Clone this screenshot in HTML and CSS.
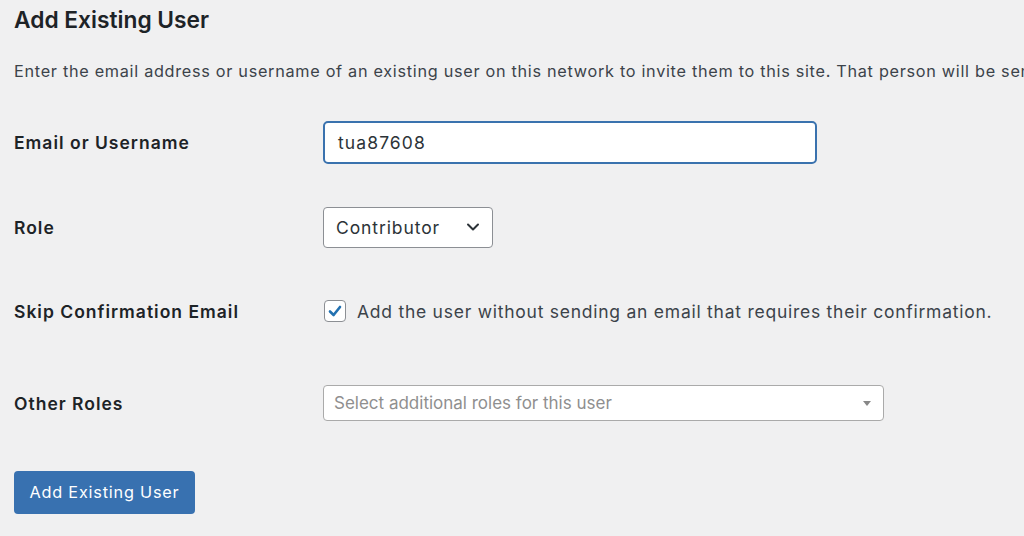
FILE: index.html
```html
<!DOCTYPE html>
<html lang="en">
<head>
<meta charset="utf-8">
<title>Add Existing User</title>
<link rel="stylesheet" href="styles.css">
</head>
<body>
<div class="wrap">
  <h2 class="title">Add Existing User</h2>
  <p class="desc">Enter the email address or username of an existing user on this network to invite them to this site. That person will be sent an email asking them to confirm the invite.</p>
  <div class="form-table">
    <div class="row row-email">
      <div class="label">Email or Username</div>
      <div class="field"><div class="input focused">tua87608</div></div>
    </div>
    <div class="row row-role">
      <div class="label">Role</div>
      <div class="field">
        <div class="select">
          <span>Contributor</span>
          <svg class="chev" width="16" height="16" viewBox="0 0 16 16"><path d="M3 5.5 L8 10.5 L13 5.5" fill="none" stroke="#2c3338" stroke-width="2" stroke-linecap="round" stroke-linejoin="round"/></svg>
        </div>
      </div>
    </div>
    <div class="row row-skip">
      <div class="label">Skip Confirmation Email</div>
      <div class="field check-field">
        <span class="checkbox"><svg width="20" height="20" viewBox="0 0 20 20"><path d="M5 10.5 L8.6 14 L15 6" fill="none" stroke="#2271b1" stroke-width="2.6" stroke-linecap="round" stroke-linejoin="round"/></svg></span>
        <span class="check-text">Add the user without sending an email that requires their confirmation.</span>
      </div>
    </div>
    <div class="row row-other">
      <div class="label">Other Roles</div>
      <div class="field">
        <div class="select2">
          <span class="placeholder">Select additional roles for this user</span>
          <span class="tri"></span>
        </div>
      </div>
    </div>
  </div>
  <div class="submit"><span class="button">Add Existing User</span></div>
</div>
</body>
</html>
```
FILE: styles.css
```css
html, body {
  margin: 0;
  padding: 0;
  background: #f0f0f1;
  overflow: hidden;
}
body {
  font-family: Inter, "Noto Sans", "Liberation Sans", sans-serif;
  color: #1d2327;
}
.wrap {
  padding: 0 0 0 14px;
  width: 1010px;
  overflow: hidden;
}
.title {
  margin: 0;
  padding-top: 4px;
  font-size: 22.75px;
  font-weight: 600;
  line-height: 32px;
  color: #1d2327;
}
.desc {
  margin: 23px 0 0;
  font-size: 16.25px;
  letter-spacing: 0.7px;
  line-height: 24px;
  color: #3c434a;
  white-space: nowrap;
  overflow: hidden;
}
.form-table {
  margin-top: 17px;
}
.row {
  display: flex;
  align-items: center;
}
.row-email { height: 85px; }
.row-role { height: 84px; }
.row-skip { height: 84px; }
.row-other { height: 100px; }
.label {
  width: 309px;
  flex: none;
  font-size: 17.5px;
  font-weight: 600;
  letter-spacing: 1px;
  color: #1d2327;
}
.input {
  box-sizing: border-box;
  width: 494px;
  height: 43px;
  border: 1px solid #8c8f94;
  border-radius: 5px;
  background: #fff;
  padding: 0 15px;
  font-size: 17.5px;
  letter-spacing: 1.1px;
  line-height: 39px;
  color: #2c3338;
}
.input.focused {
  border: 2px solid #3a72ae;
  padding: 0 13px;
}
.select {
  box-sizing: border-box;
  width: 170px;
  height: 41px;
  border: 1px solid #8c8f94;
  border-radius: 4px;
  background: #fff;
  display: flex;
  align-items: center;
  justify-content: space-between;
  padding: 0 11px 0 12px;
  font-size: 17.5px;
  letter-spacing: 0.9px;
  color: #2c3338;
}
.chev { display: block; }
.check-field {
  display: flex;
  align-items: center;
}
.checkbox {
  box-sizing: border-box;
  width: 22px;
  height: 22px;
  border: 1px solid #8c8f94;
  border-radius: 4px;
  background: #fff;
  display: flex;
  align-items: center;
  justify-content: center;
  margin-left: 1px;
}
.checkbox svg { display: block; }
.check-text {
  margin-left: 11px;
  font-size: 17.5px;
  letter-spacing: 0.75px;
  color: #3c434a;
}
.select2 {
  box-sizing: border-box;
  width: 561px;
  height: 36px;
  border: 1px solid #aaaaaa;
  border-radius: 4px;
  background: #fff;
  display: flex;
  align-items: center;
  justify-content: space-between;
  padding: 0 12px 0 10px;
}
.placeholder {
  font-size: 17px;
  color: #8f8f8f;
}
.tri {
  width: 0;
  height: 0;
  border-left: 4px solid transparent;
  border-right: 4px solid transparent;
  border-top: 5px solid #888;
}
.submit {
  padding-top: 18px;
}
.button {
  display: inline-block;
  box-sizing: border-box;
  width: 181px;
  height: 43px;
  border-radius: 4px;
  background: #3871b0;
  color: #fff;
  font-size: 16.25px;
  letter-spacing: 0.8px;
  line-height: 43px;
  text-align: center;
}
```
